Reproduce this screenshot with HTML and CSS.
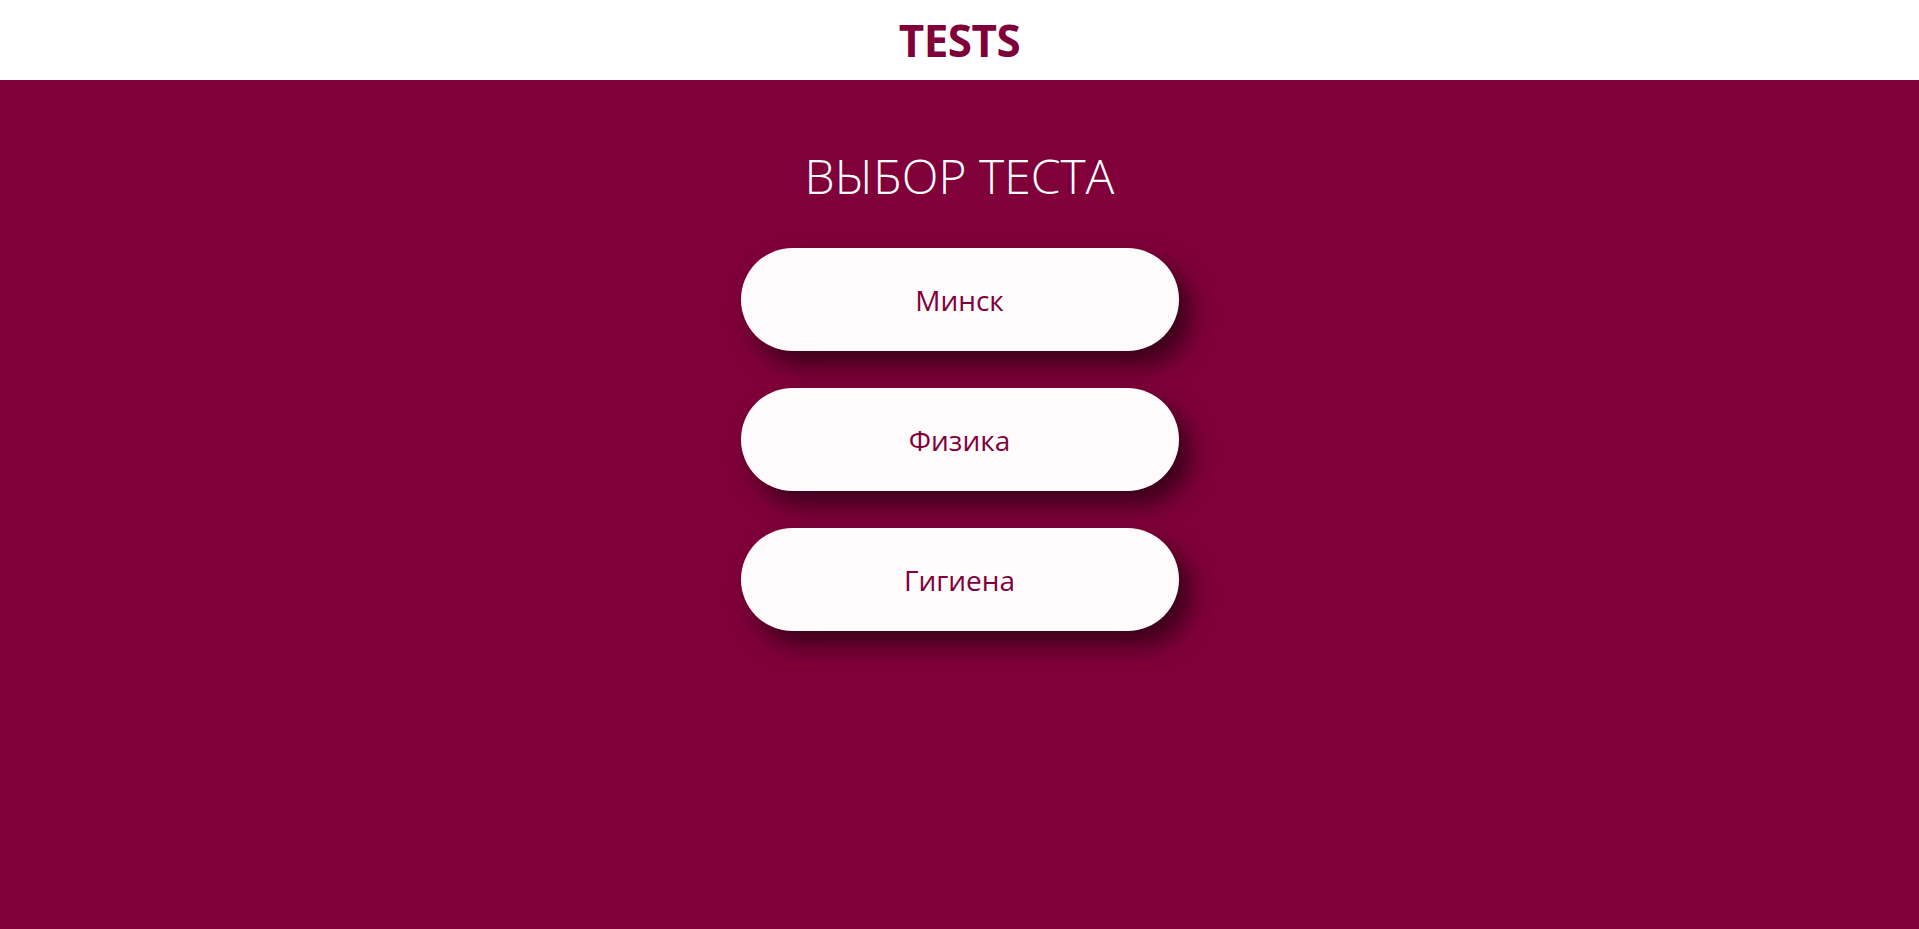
FILE: index.html
```html
<!DOCTYPE html>
<html lang="ru">
<head>
<meta charset="utf-8">
<title>Tests</title>
<link rel="stylesheet" href="styles.css">
</head>
<body>
<header class="header">
  <h1 class="logo">TESTS</h1>
</header>
<main class="main">
  <h2 class="title">ВЫБОР ТЕСТА</h2>
  <div class="list">
    <a class="test-btn" href="#">Минск</a>
    <a class="test-btn" href="#">Физика</a>
    <a class="test-btn" href="#">Гигиена</a>
  </div>
</main>
</body>
</html>
```
FILE: styles.css
```css
html, body {
  margin: 0;
  padding: 0;
  height: 100%;
}
body {
  font-family: "Open Sans", "Noto Sans", sans-serif;
  background: #800039;
  display: flex;
  flex-direction: column;
}
.header {
  height: 80px;
  background: #ffffff;
  display: flex;
  justify-content: center;
  align-items: flex-start;
}
.logo {
  margin: 14px 0 0;
  font-size: 44px;
  font-weight: 700;
  line-height: 52px;
  color: #800039;
  letter-spacing: -0.5px;
}
.main {
  flex: 1;
  display: flex;
  flex-direction: column;
  align-items: center;
}
.title {
  margin: 64px 0 0;
  font-size: 48px;
  font-weight: 300;
  line-height: 64px;
  color: #ffffff;
}
.list {
  margin-top: 40px;
  display: flex;
  flex-direction: column;
  gap: 37px;
}
.test-btn {
  width: 438px;
  height: 103px;
  border-radius: 52px;
  background: #fffbfd;
  color: #800039;
  text-decoration: none;
  display: flex;
  justify-content: center;
  align-items: center;
  font-size: 28px;
  box-shadow: 12px 14px 24px rgba(0, 0, 0, 0.55);
}
```
